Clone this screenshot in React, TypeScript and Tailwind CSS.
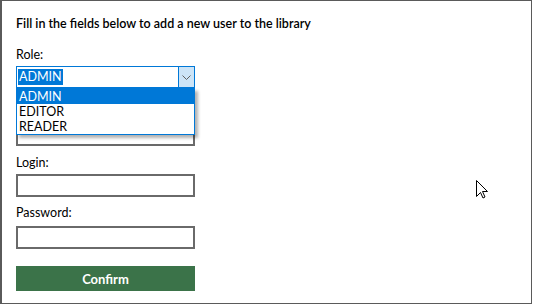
import React from 'react'

const font = { fontFamily: 'Lato, "Noto Sans", sans-serif' }

function TextBox() {
  return <div className="w-[179px] h-[23px] border-2 border-[#6a6a6a] bg-white" />
}

export default function App() {
  return (
    <div className="relative w-[533px] h-[305px] bg-white overflow-hidden" style={font}>
      <div className="w-[532px] h-[304px] border border-l-2 border-[#5a5a5a] px-[14px] flex flex-col text-[12.5px] leading-[16px] text-black">
        {/* Title */}
        <p className="mt-[15px] font-semibold">Fill in the fields below to add a new user to the library</p>

        {/* Role */}
        <label className="mt-[15px]">Role:</label>
        <div className="relative mt-[3px] w-[179px] h-[22px] border border-[#0078d7] bg-white flex">
          <div className="flex-1 flex items-center pl-[1px]">
            <span className="bg-[#0078d7] text-white px-[1px] leading-[16px]">ADMIN</span>
          </div>
          <div className="w-[16px] h-full bg-[#cce4f7] border-l border-[#0078d7] flex items-center justify-center">
            <svg width="9" height="5" viewBox="0 0 9 5" fill="none">
              <path d="M0.5 0.5 L4.5 4.5 L8.5 0.5" stroke="#606060" strokeWidth="1" />
            </svg>
          </div>
        </div>

        {/* Field covered by the open list */}
        <div className="mt-[36px]">
          <div className="w-[179px] h-[22px] border-2 border-[#6a6a6a] bg-white" />
        </div>

        {/* Login */}
        <label className="mt-[9px]">Login:</label>
        <div className="mt-[3px]">
          <TextBox />
        </div>

        {/* Password */}
        <label className="mt-[8px]">Password:</label>
        <div className="mt-[5px]">
          <TextBox />
        </div>

        {/* Confirm */}
        <button className="mt-[17px] w-[179px] h-[25px] bg-[#3b7349] text-white font-bold text-[13px]">
          Confirm
        </button>
      </div>

      {/* Open dropdown list */}
      <div className="absolute left-[16px] top-[88px] w-[179px] h-[47px] bg-white border border-[#0078d7] shadow-[3px_3px_3px_rgba(0,0,0,0.3)] flex flex-col text-[12.5px] leading-[15px] text-black">
        <div className="bg-[#0078d7] text-white pl-[2px] h-[15px]">ADMIN</div>
        <div className="pl-[2px] h-[15px]">EDITOR</div>
        <div className="pl-[2px] h-[15px]">READER</div>
      </div>

      {/* Mouse cursor */}
      <svg className="absolute left-[476px] top-[180px]" width="12" height="19" viewBox="0 0 12 19">
        <path
          d="M0.5 0.5 L0.5 16.5 L4.5 12.5 L7 18 L9 17 L6.5 11.5 L11.5 11.5 Z"
          fill="white"
          stroke="black"
          strokeWidth="1"
          strokeLinejoin="miter"
        />
      </svg>
    </div>
  )
}
